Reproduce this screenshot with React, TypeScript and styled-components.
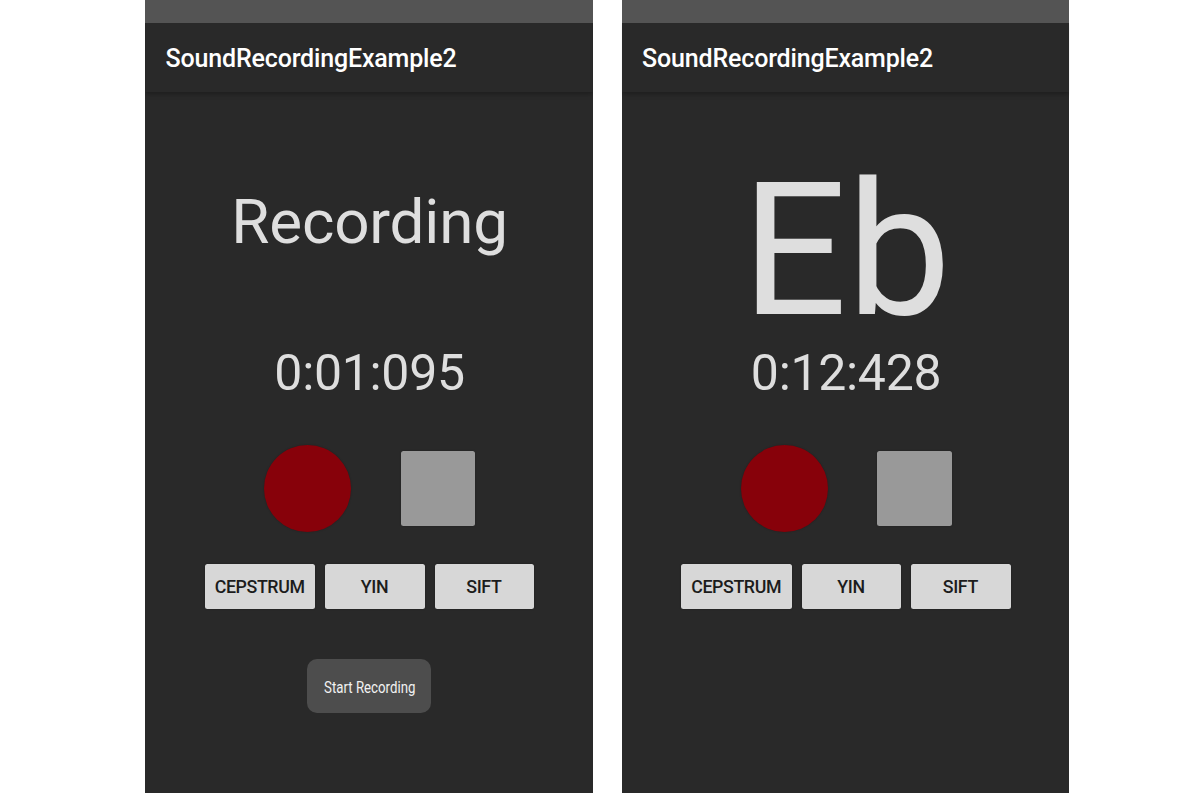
import React from "react";
import styled, { createGlobalStyle } from "styled-components";

const GlobalStyle = createGlobalStyle`
  * { box-sizing: border-box; }
  body {
    margin: 0;
    background: #fff;
    font-family: Roboto, "Liberation Sans", sans-serif;
  }
`;

const Page = styled.main`
  display: flex;
  gap: 29px;
  height: 800px;
  padding-left: 145.3px;
  overflow: hidden;
`;

const Phone = styled.section`
  display: flex;
  flex-direction: column;
  width: 447.5px;
  height: 792.5px;
  background: #292929;
`;

const StatusBar = styled.div`
  height: 23px;
  flex: none;
  background: #545454;
`;

const AppBar = styled.header`
  display: flex;
  align-items: center;
  flex: none;
  height: 69px;
  padding: 3px 0 0 20.3px;
  background: #292929;
  box-shadow: 0 2px 5px rgba(0, 0, 0, 0.3);
  clip-path: inset(0 0 -10px 0);
`;

const Title = styled.h1`
  margin: 0;
  font-size: 25px;
  font-weight: 500;
  line-height: 30px;
  letter-spacing: -0.17px;
  color: #fff;
`;

const Content = styled.div`
  display: flex;
  flex-direction: column;
  align-items: center;
  flex: 1;
  padding-left: 1px;
`;

const Readout = styled.div<{ $large: boolean }>`
  height: 248px;
  padding-top: ${(p) => (p.$large ? 48 : 90)}px;
  font-size: ${(p) => (p.$large ? 186 : 62)}px;
  line-height: ${(p) => (p.$large ? 220 : 80)}px;
  letter-spacing: ${(p) => (p.$large ? -0.6 : -0.2)}px;
  color: #dedede;
  white-space: nowrap;
`;

const Timer = styled.div`
  margin-top: 3px;
  font-size: 50px;
  line-height: 60px;
  letter-spacing: -0.3px;
  color: #dedede;
`;

const Controls = styled.div`
  display: flex;
  align-items: center;
  gap: 49.5px;
  height: 88px;
  margin-top: 41.3px;
`;

const RecordButton = styled.button`
  width: 87px;
  height: 87px;
  padding: 0;
  border: 0;
  border-radius: 50%;
  background: #87010a;
  box-shadow: 0 0 2px rgba(0, 0, 0, 0.25);
`;

const StopButton = styled.button`
  width: 74.6px;
  height: 74.6px;
  padding: 0;
  border: 0;
  border-radius: 2.5px;
  background: #999;
  box-shadow: 0 0 2px rgba(0, 0, 0, 0.25);
`;

const Methods = styled.div`
  display: flex;
  gap: 9.8px;
  margin-top: 31.3px;
`;

const MethodButton = styled.button<{ $wide?: boolean }>`
  width: ${(p) => (p.$wide ? 110.4 : 99.6)}px;
  height: 45px;
  padding: 1px 1px 0 0;
  border: 0;
  border-radius: 2.5px;
  background: #d7d7d7;
  box-shadow: 0 0 2px rgba(0, 0, 0, 0.35);
  color: #1c1c1c;
  font: 500 17.8px/24px Roboto, "Liberation Sans", sans-serif;
  letter-spacing: -0.38px;
  white-space: nowrap;
`;

const Toast = styled.div`
  display: flex;
  align-items: center;
  justify-content: center;
  width: 124.5px;
  height: 54px;
  margin-top: 50.5px;
  margin-right: 1px;
  padding: 3px 0 0 1px;
  border-radius: 10px;
  background: #4d4d4d;
  color: #f2f2f2;
`;

const ToastText = styled.span`
  font-size: 15.6px;
  line-height: 20px;
  white-space: nowrap;
  transform: scaleX(0.85);
`;

type ScreenProps = {
  readout: string;
  time: string;
  large?: boolean;
  toast?: string;
};

function RecorderScreen({ readout, time, large = false, toast }: ScreenProps) {
  return (
    <Phone>
      <StatusBar />
      <AppBar>
        <Title>SoundRecordingExample2</Title>
      </AppBar>
      <Content>
        <Readout $large={large}>{readout}</Readout>
        <Timer>{time}</Timer>
        <Controls>
          <RecordButton aria-label="Record" />
          <StopButton aria-label="Stop" />
        </Controls>
        <Methods>
          <MethodButton $wide>CEPSTRUM</MethodButton>
          <MethodButton>YIN</MethodButton>
          <MethodButton>SIFT</MethodButton>
        </Methods>
        {toast && (
          <Toast role="status">
            <ToastText>{toast}</ToastText>
          </Toast>
        )}
      </Content>
    </Phone>
  );
}

export default function App() {
  return (
    <>
      <GlobalStyle />
      <Page>
        <RecorderScreen readout="Recording" time="0:01:095" toast="Start Recording" />
        <RecorderScreen readout="Eb" time="0:12:428" large />
      </Page>
    </>
  );
}
